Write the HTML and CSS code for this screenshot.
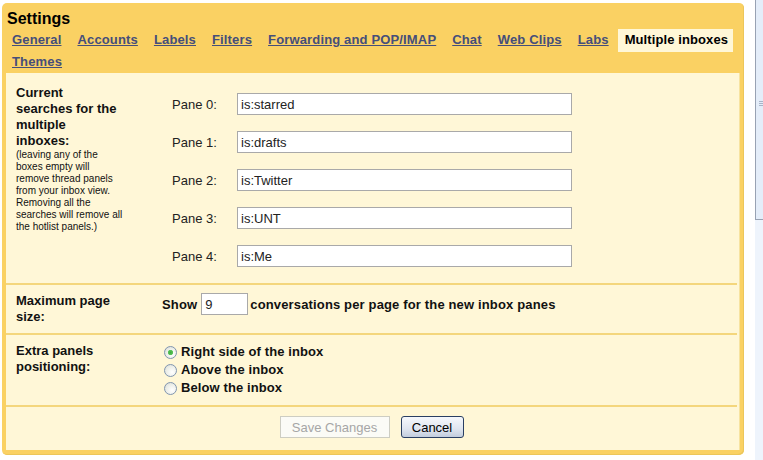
FILE: index.html
```html
<!DOCTYPE html>
<html>
<head>
<meta charset="utf-8">
<title>Settings - Multiple inboxes</title>
<link rel="stylesheet" href="styles.css">
</head>
<body>
<div class="page">
  <div class="box">
    <div class="title">Settings</div>
    <nav class="tabs">
      <a href="#">General</a>
      <a href="#">Accounts</a>
      <a href="#">Labels</a>
      <a href="#">Filters</a>
      <a href="#">Forwarding and POP/IMAP</a>
      <a href="#">Chat</a>
      <a href="#">Web Clips</a>
      <a href="#">Labs</a>
      <span class="tab-on">Multiple inboxes</span>
      <a href="#">Themes</a>
    </nav>
    <div class="content">
      <div class="row row-searches">
        <div class="label">
          <b>Current searches for the multiple inboxes:</b>
          <p class="note">(leaving any of the<br>boxes empty will<br>remove thread panels<br>from your inbox view.<br>Removing all the<br>searches will remove all<br>the hotlist panels.)</p>
        </div>
        <div class="panes">
          <div class="pane"><span class="pane-name">Pane 0:</span><input class="text" type="text" value="is:starred"></div>
          <div class="pane"><span class="pane-name">Pane 1:</span><input class="text" type="text" value="is:drafts"></div>
          <div class="pane"><span class="pane-name">Pane 2:</span><input class="text" type="text" value="is:Twitter"></div>
          <div class="pane"><span class="pane-name">Pane 3:</span><input class="text" type="text" value="is:UNT"></div>
          <div class="pane"><span class="pane-name">Pane 4:</span><input class="text" type="text" value="is:Me"></div>
        </div>
      </div>
      <div class="row">
        <div class="label"><b>Maximum page size:</b></div>
        <div class="size">
          <span>Show</span><input class="num" type="text" value="9"><span>conversations per page for the new inbox panes</span>
        </div>
      </div>
      <div class="row">
        <div class="label"><b>Extra panels positioning:</b></div>
        <div class="radios">
          <label class="opt"><input type="radio" name="pos" checked>Right side of the inbox</label>
          <label class="opt"><input type="radio" name="pos">Above the inbox</label>
          <label class="opt"><input type="radio" name="pos">Below the inbox</label>
        </div>
      </div>
      <div class="actions">
        <button class="btn btn-save" disabled>Save Changes</button>
        <button class="btn btn-cancel">Cancel</button>
      </div>
    </div>
  </div>
  <div class="scroll">
    <div class="thumb"><span class="grip"></span></div>
  </div>
</div>
</body>
</html>
```
FILE: styles.css
```css
html, body {
  margin: 0;
  padding: 0;
  background: #ffffff;
}

body {
  font-family: "Liberation Sans", Arial, sans-serif;
  font-size: 13px;
  color: #000;
}

.page {
  display: flex;
  width: 763px;
  height: 460px;
  overflow: hidden;
}

.box {
  margin: 3px 0 0 2px;
  width: 742px;
  height: 452px;
  box-sizing: border-box;
  background: #fad163;
  border-radius: 5px;
  padding: 6px 0 5px 0;
  display: flex;
  flex-direction: column;
  box-shadow: inset -1px -1px 0 #ecc65a;
}

.title {
  font-size: 16px;
  font-weight: bold;
  line-height: 20px;
  padding-left: 5px;
}

.tabs {
  display: flex;
  flex-wrap: wrap;
  column-gap: 16px;
  padding: 0 2px 0 10px;
  line-height: 22px;
  font-weight: bold;
  font-size: 13px;
  letter-spacing: 0.15px;
}

.tabs a {
  color: #454e7a;
  text-decoration: underline;
}

.tab-on {
  background: #fff7d7;
  color: #000;
  letter-spacing: 0.1px;
  padding: 0 5px 1px 7px;
  margin: 0 0 -1px -7px;
}

.content {
  flex: 1;
  margin: 0 4px 0 4px;
  background: #fff7d7;
  display: flex;
  flex-direction: column;
  box-shadow: inset -1px 0 0 #f7e3a0;
}

.row {
  display: grid;
  grid-template-columns: 156px 1fr;
  border-bottom: 2px solid #f4d67c;
  margin-right: 3px;
  padding: 8px 0;
}

.row-searches {
  padding: 12px 0 16px;
}

.label {
  padding-left: 10px;
  width: 105px;
  font-weight: bold;
  line-height: 16px;
  color: #111;
}

.note {
  margin: 0;
  font-weight: normal;
  font-size: 10px;
  line-height: 12px;
  color: #111;
  white-space: nowrap;
}

.panes {
  padding-top: 8px;
  display: flex;
  flex-direction: column;
  gap: 16px;
}

.pane {
  display: flex;
  align-items: center;
  padding-left: 10px;
}

.pane-name {
  width: 65px;
  color: #222;
}

input.text,
input.num {
  box-sizing: border-box;
  height: 22px;
  border: 1px solid #a9a9a9;
  background: #fff;
  font-family: "Liberation Sans", Arial, sans-serif;
  font-size: 13px;
  color: #222;
  padding: 0 3px;
  margin: 0;
}

input.text {
  width: 335px;
}

input.num {
  width: 47px;
  margin: 0 2px 0 4px;
}

.size {
  display: flex;
  align-items: center;
  height: 22px;
  font-weight: bold;
  color: #111;
  letter-spacing: 0.15px;
}

.radios {
  display: flex;
  flex-direction: column;
  font-weight: bold;
  line-height: 18px;
  color: #111;
  letter-spacing: 0.1px;
}

.opt {
  display: flex;
  align-items: center;
  height: 18px;
}

.opt input {
  -webkit-appearance: none;
  appearance: none;
  box-sizing: border-box;
  width: 13px;
  height: 13px;
  margin: 0 4px 0 2px;
  border: 1px solid #8095b0;
  border-radius: 50%;
  background: radial-gradient(circle at 65% 65%, #ffffff 0%, #eceee8 55%, #d6d8d0 100%);
}

.opt input:checked {
  background: radial-gradient(circle at 50% 50%, #3faa3f 0, #57c257 2.2px, transparent 3px),
              radial-gradient(circle at 65% 65%, #ffffff 0%, #eceee8 55%, #d6d8d0 100%);
}

.actions {
  display: flex;
  justify-content: center;
  gap: 11px;
  padding: 9px 3px 0 0;
}

.btn {
  box-sizing: border-box;
  height: 22px;
  font-family: "Liberation Sans", Arial, sans-serif;
  font-size: 13px;
  padding: 0;
  margin: 0;
}

.btn-save {
  width: 110px;
  background: #fbfbf6;
  border: 1px solid #cdcdc2;
  color: #a6a6a6;
}

.btn-cancel {
  width: 63px;
  background: linear-gradient(#f6f8fc, #dfe5ef 60%, #c3cddd);
  border: 1px solid #2a3f63;
  border-radius: 3px;
  color: #000;
}

.scroll {
  margin-left: auto;
  width: 8px;
  height: 460px;
  background: #eef4fc;
}

.thumb {
  height: 219px;
  border-left: 1px solid #98a2b3;
  border-bottom: 1px solid #98a2b3;
  background: #e4edf9;
  position: relative;
}

.grip {
  position: absolute;
  left: 3px;
  top: 101px;
  width: 4px;
  height: 5px;
  background: repeating-linear-gradient(#a8b4c8 0 1px, transparent 1px 2px);
}
```
